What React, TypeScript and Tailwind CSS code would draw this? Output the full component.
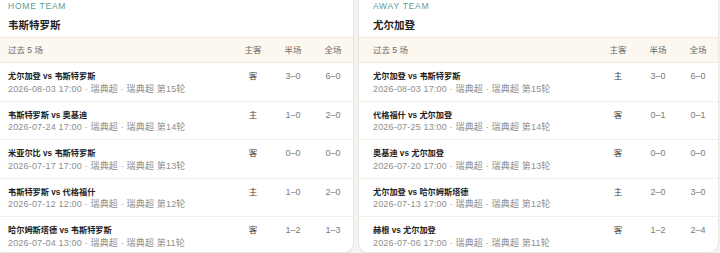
import React from "react";

type Match = { title: string; date: string; round: string; side: string; half: string; full: string };

const home: Match[] = [
  { title: "尤尔加登 vs 韦斯特罗斯", date: "2026-08-03 17:00", round: "第15轮", side: "客", half: "3–0", full: "6–0" },
  { title: "韦斯特罗斯 vs 奥基迪", date: "2026-07-24 17:00", round: "第14轮", side: "主", half: "1–0", full: "2–0" },
  { title: "米亚尔比 vs 韦斯特罗斯", date: "2026-07-17 17:00", round: "第13轮", side: "客", half: "0–0", full: "0–0" },
  { title: "韦斯特罗斯 vs 代格福什", date: "2026-07-12 12:00", round: "第12轮", side: "主", half: "1–0", full: "2–0" },
  { title: "哈尔姆斯塔德 vs 韦斯特罗斯", date: "2026-07-04 13:00", round: "第11轮", side: "客", half: "1–2", full: "1–3" },
];

const away: Match[] = [
  { title: "尤尔加登 vs 韦斯特罗斯", date: "2026-08-03 17:00", round: "第15轮", side: "主", half: "3–0", full: "6–0" },
  { title: "代格福什 vs 尤尔加登", date: "2026-07-25 13:00", round: "第14轮", side: "客", half: "0–1", full: "0–1" },
  { title: "奥基迪 vs 尤尔加登", date: "2026-07-20 17:00", round: "第13轮", side: "客", half: "0–0", full: "0–0" },
  { title: "尤尔加登 vs 哈尔姆斯塔德", date: "2026-07-13 17:00", round: "第12轮", side: "主", half: "2–0", full: "3–0" },
  { title: "赫根 vs 尤尔加登", date: "2026-07-06 17:00", round: "第11轮", side: "客", half: "1–2", full: "2–4" },
];

function Card({ label, team, rows }: { label: string; team: string; rows: Match[] }) {
  return (
    <div className="w-[361px] shrink-0 rounded-b-[10px] border border-[#e9e6e0] bg-white shadow-[0_1px_2px_rgba(0,0,0,0.03)] overflow-hidden">
      <div className="px-[14px] pt-[7px]">
        <div className="text-[8.5px] leading-[12px] tracking-[0.09em] text-[#5b9b96]">{label}</div>
        <div className="mt-[7px] text-[10.5px] leading-[12px] font-bold text-[#1f1f1f]">{team}</div>
      </div>
      <div className="mt-[6px] grid h-[26px] grid-cols-[1fr_40px_40px_40px] items-center border-y border-[#efe9df] bg-[#fcf7ef] pl-[14px] text-[8.5px] text-[#6a6a6a]">
        <div>过去 5 场</div>
        <div className="text-center">主客</div>
        <div className="text-center">半场</div>
        <div className="text-center">全场</div>
      </div>
      {rows.map((r, i) => (
        <div
          key={i}
          className="grid grid-cols-[1fr_40px_40px_40px] border-b border-[#f0eeea] pl-[14px] pt-[8px] pb-[6px] last:border-b-0 last:pb-[3px]"
        >
          <div>
            <div className="text-[8.2px] leading-[11px] font-bold text-[#222]">{r.title}</div>
            <div className="mt-[1.5px] text-[9px] leading-[11px] tracking-[0.02em] text-[#8e8e8e]">
              {r.date} · 瑞典超 · 瑞典超 {r.round}
            </div>
          </div>
          <div className="text-center text-[8.5px] leading-[11px] text-[#444]">{r.side}</div>
          <div className="text-center text-[9px] leading-[11px] text-[#7a7a7a]">{r.half}</div>
          <div className="text-center text-[9px] leading-[11px] text-[#7a7a7a]">{r.full}</div>
        </div>
      ))}
    </div>
  );
}

export default function App() {
  return (
    <div
      className="h-[253px] w-[720px] overflow-hidden bg-[#f5f4f0]"
      style={{ fontFamily: '"Liberation Sans", "Noto Sans CJK SC", sans-serif' }}
    >
      <div className="-ml-[7px] -mt-[8px] flex gap-[4px]">
        <Card label="HOME TEAM" team="韦斯特罗斯" rows={home} />
        <Card label="AWAY TEAM" team="尤尔加登" rows={away} />
      </div>
    </div>
  );
}
